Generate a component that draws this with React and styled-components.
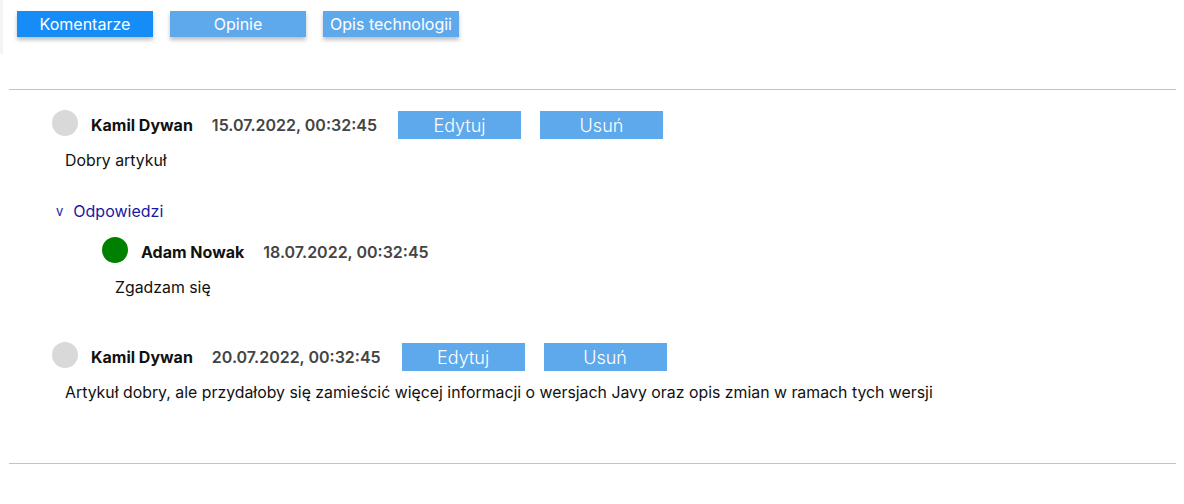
import React from 'react';
import styled, { createGlobalStyle } from 'styled-components';

const GlobalStyle = createGlobalStyle`
  body {
    margin: 0;
    background: #fff;
    font-family: Inter, "Noto Sans", sans-serif;
  }
`;

const TabBar = styled.nav`
  display: flex;
  gap: 17px;
  width: fit-content;
  padding: 11px 0 17px 14px;
  border-left: 3px solid #f4f4f4;
`;

const Tab = styled.button`
  width: 136px;
  height: 26px;
  border: none;
  padding: 0;
  background-color: ${(p) => (p.$active ? '#168cf6' : '#5ea9ec')};
  color: #fff;
  font-family: inherit;
  font-size: 16px;
  font-weight: 400;
  box-shadow: 0 3px 4px rgba(0, 0, 0, 0.25);
  cursor: pointer;
`;

const Divider = styled.hr`
  border: none;
  height: 1px;
  background: #c4c4c4;
  margin: ${(p) => p.$top}px 8px 0 9px;
`;

const Comments = styled.section`
  padding: 20px 0 0 52px;
`;

const Header = styled.div`
  display: flex;
  align-items: center;
  min-height: 28px;
  margin-top: ${(p) => p.$top || 0}px;
  margin-left: ${(p) => p.$indent || 0}px;
`;

const Avatar = styled.span`
  width: 26px;
  height: 26px;
  border-radius: 50%;
  background: ${(p) => p.$color || '#d9d9d9'};
  margin: 0 13px 4px 0;
  flex-shrink: 0;
`;

const Author = styled.span`
  font-size: 16px;
  font-weight: 700;
  color: #111;
  margin-right: 19px;
`;

const Date = styled.span`
  font-size: 16px;
  font-weight: 600;
  color: #444;
  margin-right: 21px;
`;

const Action = styled.button`
  width: 123px;
  height: 28px;
  border: none;
  padding: 0;
  background: #5ea9ec;
  color: #fff;
  font-family: inherit;
  font-size: 18px;
  font-weight: 300;
  margin-right: 19px;
  cursor: pointer;
`;

const Body = styled.p`
  margin: ${(p) => p.$top}px 0 0 ${(p) => p.$indent}px;
  font-size: 15.85px;
  line-height: 20px;
  color: #111;
`;

const RepliesToggle = styled.div`
  display: flex;
  align-items: center;
  gap: 10px;
  margin: 30px 0 0 4px;
  font-size: 16px;
  line-height: 20px;
  color: #1a1aa0;
  cursor: pointer;
`;

const Chevron = styled.span`
  font-size: 13px;
`;

const App = () => {
  return (
    <>
      <GlobalStyle />
      <TabBar>
        <Tab $active>Komentarze</Tab>
        <Tab>Opinie</Tab>
        <Tab>Opis technologii</Tab>
      </TabBar>

      <Divider $top={35} />

      <Comments>
        <Header>
          <Avatar />
          <Author>Kamil Dywan</Author>
          <Date>15.07.2022, 00:32:45</Date>
          <Action>Edytuj</Action>
          <Action>Usuń</Action>
        </Header>
        <Body $top={11} $indent={13}>Dobry artykuł</Body>

        <RepliesToggle>
          <Chevron>v</Chevron>
          Odpowiedzi
        </RepliesToggle>

        <Header $top={16} $indent={50}>
          <Avatar $color="#008000" />
          <Author>Adam Nowak</Author>
          <Date>18.07.2022, 00:32:45</Date>
        </Header>
        <Body $top={11} $indent={63}>Zgadzam się</Body>

        <Header $top={44}>
          <Avatar />
          <Author>Kamil Dywan</Author>
          <Date>20.07.2022, 00:32:45</Date>
          <Action>Edytuj</Action>
          <Action>Usuń</Action>
        </Header>
        <Body $top={11} $indent={13}>
          Artykuł dobry, ale przydałoby się zamieścić więcej informacji o wersjach Javy oraz opis zmian w ramach tych wersji
        </Body>
      </Comments>

      <Divider $top={60} />
    </>
  );
};

export default App;
